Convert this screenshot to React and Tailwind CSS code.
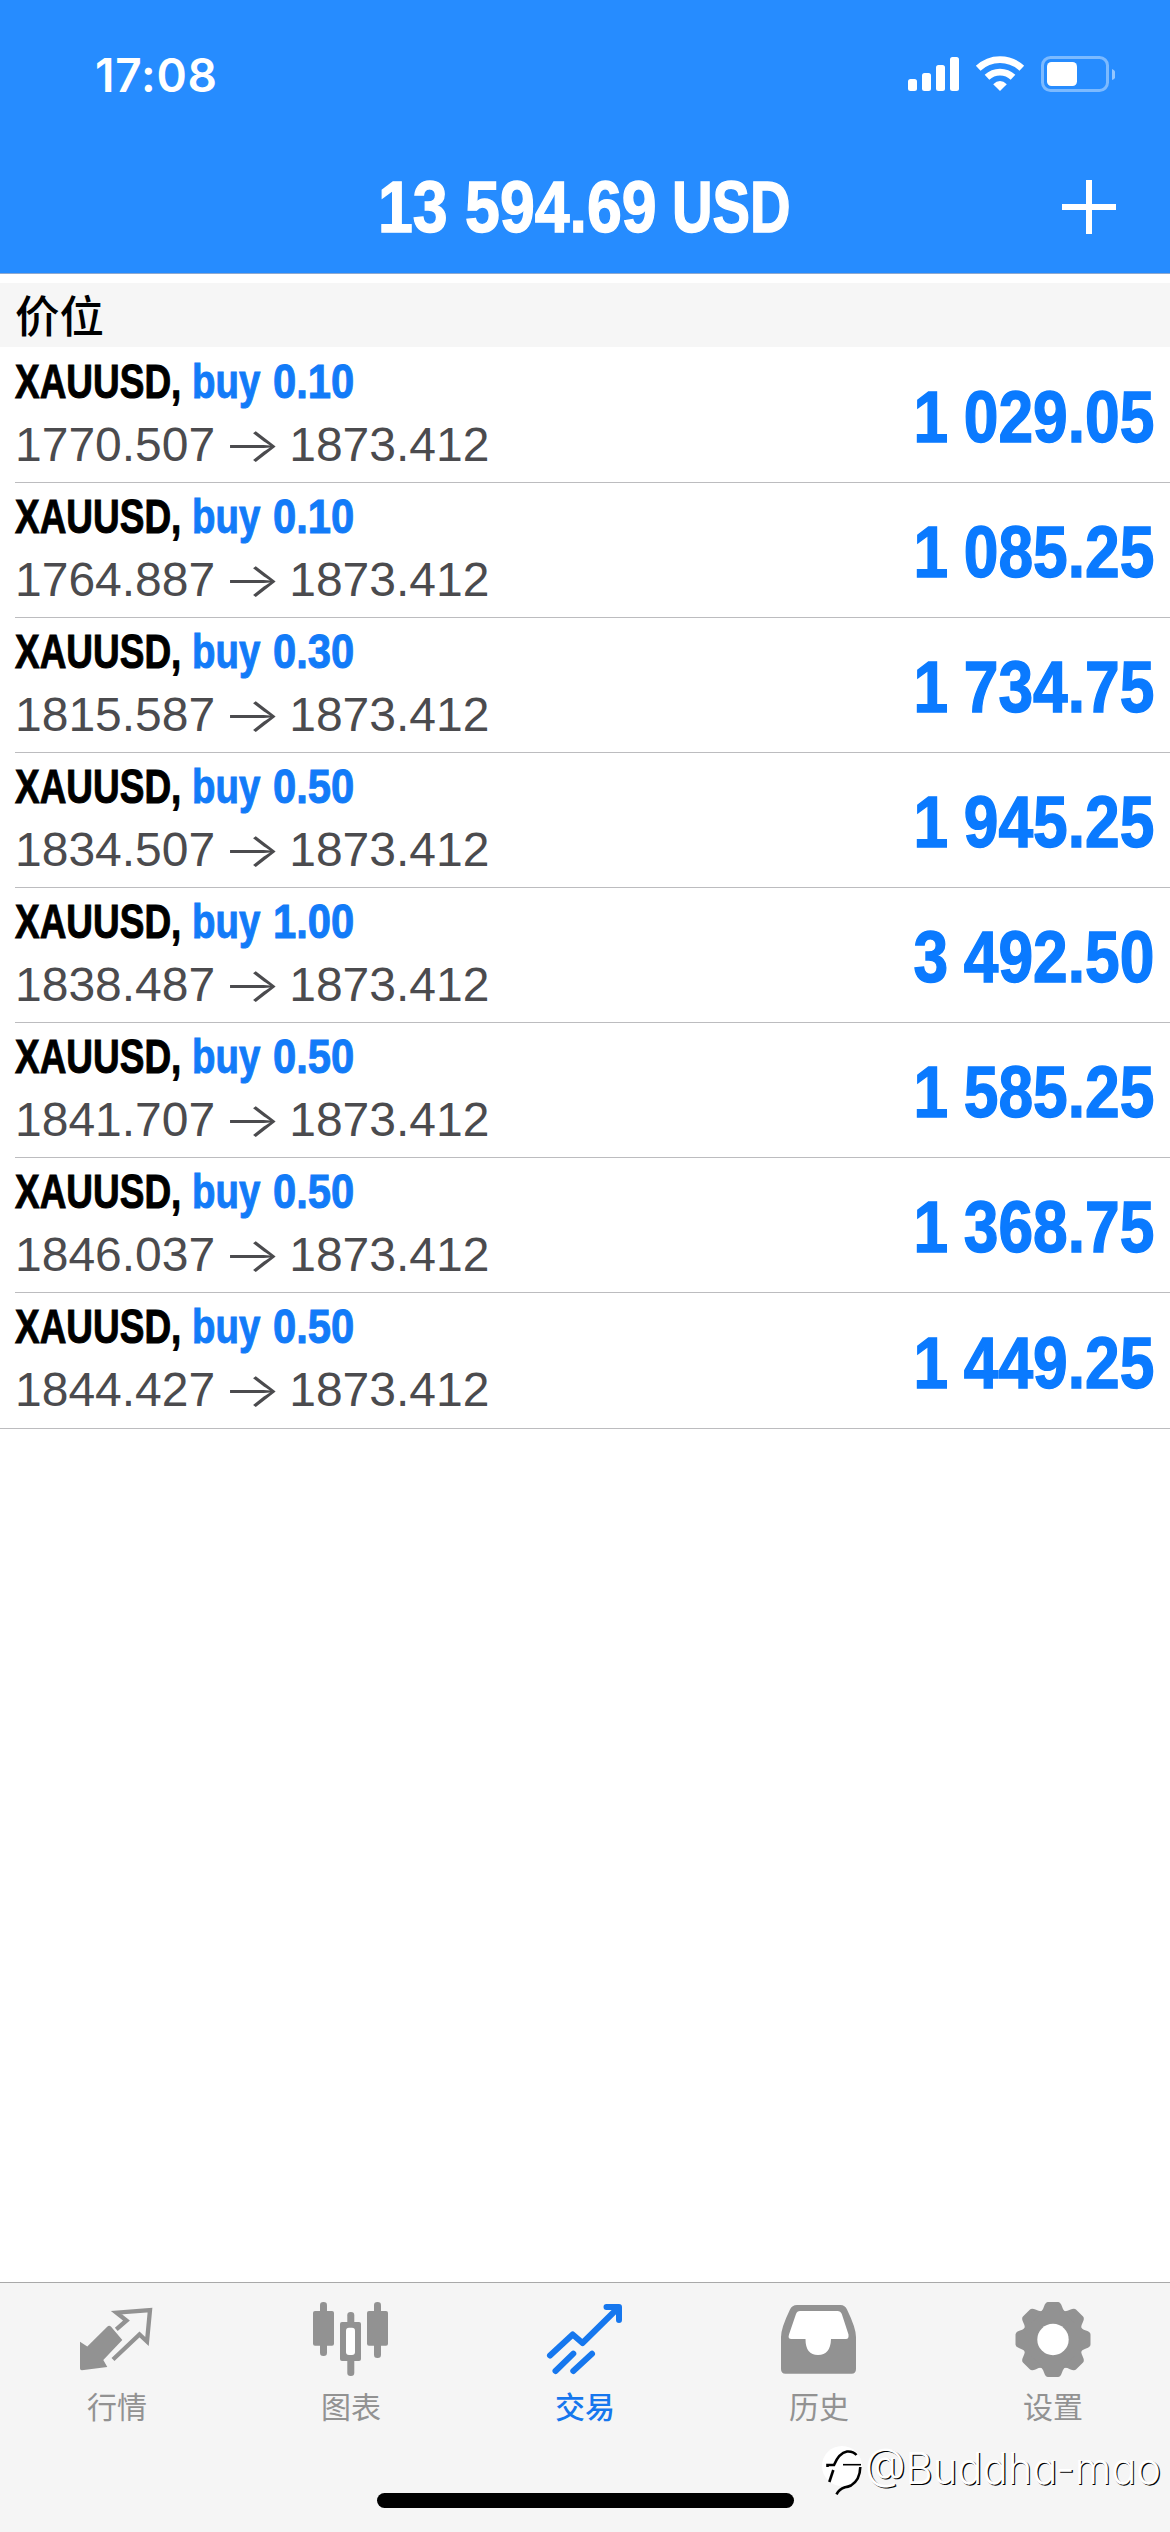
import React from 'react'

const positions = [
  { volume: '0.10', open: '1770.507', profit: '1 029.05' },
  { volume: '0.10', open: '1764.887', profit: '1 085.25' },
  { volume: '0.30', open: '1815.587', profit: '1 734.75' },
  { volume: '0.50', open: '1834.507', profit: '1 945.25' },
  { volume: '1.00', open: '1838.487', profit: '3 492.50' },
  { volume: '0.50', open: '1841.707', profit: '1 585.25' },
  { volume: '0.50', open: '1846.037', profit: '1 368.75' },
  { volume: '0.50', open: '1844.427', profit: '1 449.25' },
]

function StatusBar() {
  return (
    <div className="h-[142px] pl-[95px] pr-[55px] pt-[47px] flex items-start justify-between">
      <span className="font-['Inter'] font-semibold text-[46px] leading-[56px] tracking-[0.8px]">17:08</span>
      <svg className="mt-[5px]" width="209" height="44" viewBox="905 52 209 44" fill="#fff">
        <rect x="907" y="79" width="9" height="12" rx="2.5" />
        <rect x="921" y="73" width="9" height="18" rx="2.5" />
        <rect x="935" y="65" width="9" height="26" rx="2.5" />
        <rect x="949" y="57" width="9" height="34" rx="2.5" />
        <g fill="none" stroke="#fff" strokeWidth="6.8">
          <path d="M977.2 68.3a31.5 31.5 0 0 1 43.6 0" />
          <path d="M986 77.3a19 19 0 0 1 26 0" />
        </g>
        <path d="M999 91l-6.8-6.8q6.8-6.4 13.6 0z" />
        <rect x="1041.5" y="57.5" width="65" height="33" rx="8" fill="none" stroke="#fff" strokeOpacity=".4" strokeWidth="3" />
        <rect x="1046" y="62" width="30" height="24" rx="4.5" />
        <path d="M1111 69q4 1.500 4 5.500t-4 5.500z" fillOpacity=".5" />
      </svg>
    </div>
  )
}

function Header() {
  return (
    <header className="h-[274px] bg-[#268cff] text-white border-b border-[#8fa9cf]">
      <StatusBar />
      <div className="h-[130px] pl-[378px] pr-[54px] flex items-center">
        <h1 className="flex font-bold text-[72px] leading-[80px] whitespace-nowrap [-webkit-text-stroke:1.4px_currentColor]">
          <span className="w-[294px] origin-left scale-x-[0.87]">13 594.69</span>
          <span className="w-[120px] origin-left scale-x-[0.78]">USD</span>
        </h1>
        <svg className="ml-auto" width="54" height="54" viewBox="0 0 54 54" stroke="#fff" strokeWidth="6">
          <path d="M27 0v54M0 27h54" />
        </svg>
      </div>
    </header>
  )
}

function Position({ volume, open, profit }) {
  return (
    <li className="h-[135px] ml-[15px] pr-4 flex justify-between border-b border-[#bcbcbf] last:h-[136px] last:ml-0 last:pl-[15px]">
      <div className="pt-[3px] whitespace-nowrap">
        <div className="flex font-bold text-[48px] leading-[62px] [-webkit-text-stroke:1px_currentColor]">
          <span className="w-[177px] origin-left scale-x-[0.77] text-black">XAUUSD,</span>
          <span className="w-[81px] origin-left scale-x-[0.8] text-[#127bf8]">buy</span>
          <span className="w-[90px] origin-left scale-x-[0.87] text-[#127bf8]">{volume}</span>
        </div>
        <div className="flex text-[48px] leading-[64px] text-[#4b4b4e]">
          <span>{open}</span>
          <span className="w-[74px] text-center font-['Inter'] font-light scale-x-[1.3]">→</span>
          <span>1873.412</span>
        </div>
      </div>
      <div className="pt-1 self-center font-bold text-[72px] leading-[80px] [word-spacing:-2px] whitespace-nowrap text-[#0a7aff] origin-right scale-x-[0.865] [-webkit-text-stroke:1.4px_currentColor]">
        {profit}
      </div>
    </li>
  )
}

const QuotesIcon = () => (
  <svg width="80" height="80" viewBox="0 0 80 80">
    <path fill="currentColor" d="M3 41.700l7.300 4.800L30.500 26.500q1.800-1.500 3.600.3L45.300 40 26.300 60l4 7-25.500 3.300Q3 70.300 3 68.500z" />
    <path fill="none" stroke="currentColor" strokeWidth="4.300" d="M39.300 29.300L49.500 20.500 39.500 12.600 73 10 70 41.500 62.500 34.500 36 59.500" />
  </svg>
)

const ChartIcon = () => (
  <svg width="80" height="80" viewBox="0 0 80 80" fill="currentColor">
    <rect x="2" y="11" width="21" height="34.700" rx="2" />
    <rect x="9" y="2" width="7" height="54" rx="3.300" />
    <rect x="36.300" y="12" width="7" height="64" rx="3.300" />
    <rect x="29" y="22" width="21" height="39" rx="2" />
    <rect x="35" y="27.700" width="9" height="27.300" rx="3" fill="#fff" />
    <rect x="56" y="11" width="21" height="34.700" rx="2" />
    <rect x="63" y="2" width="7" height="56" rx="3.300" />
  </svg>
)

const TradeIcon = () => (
  <svg width="80" height="80" viewBox="0 0 80 80" fill="none" stroke="currentColor" strokeWidth="6" strokeLinecap="round">
    <path strokeLinejoin="round" d="M5 55.500L27.700 34.500 37.500 43 73 8M61.500 7H74V20" />
    <path d="M10.500 71L28.300 53.700M28.300 71L47 53.700" />
  </svg>
)

const HistoryIcon = () => (
  <svg width="80" height="80" viewBox="0 0 80 80">
    <path fill="currentColor" d="M18 5H61.500Q66 5 68 9.500 77 28 77 37V69Q77 73.700 72.500 73.700H6.500Q2 73.700 2 69V37Q2 28 11 9.500 13 5 18 5z" />
    <path fill="#fff" d="M21 11H58.500Q61.500 11 62.800 14L69.500 34.500Q70 39 67 39H52Q51.500 55 39 55T26.500 39H12.500Q8.500 39 10 34.500L17 14Q18 11 21 11z" />
  </svg>
)

const SettingsIcon = () => (
  <svg width="80" height="80" viewBox="-40 -39.500 80 80">
    <circle r="30.500" fill="currentColor" />
    {[0, 45, 90, 135, 180, 225, 270, 315].map((deg) => (
      <path key={deg} transform={`rotate(${deg})`} fill="currentColor" d="M-14-27Q-10.500-28-9-33-7.500-37.500-5-37.500H5Q7.500-37.500 9-33 10.500-28 14-27z" />
    ))}
    <circle r="15.700" fill="#fff" />
  </svg>
)

const tabs = [
  { label: '行情', Icon: QuotesIcon },
  { label: '图表', Icon: ChartIcon },
  { label: '交易', Icon: TradeIcon, active: true },
  { label: '历史', Icon: HistoryIcon },
  { label: '设置', Icon: SettingsIcon },
]

function Watermark() {
  return (
    <div className="absolute left-[821px] top-[2445px] flex items-start text-white whitespace-nowrap">
      <svg width="44" height="52" viewBox="0 0 44 52">
        <circle cx="21" cy="21" r="20" fill="#fff" />
        <g fill="none" stroke="#000" strokeWidth="2.600">
          <path d="M6.500 22v-2H13Q18 8 26 6.500q6-.5 9.500 3.500" />
          <path d="M12.300 25l-4 12" />
          <path d="M22 19.700h18" strokeWidth="1.600" />
          <path d="M39.300 22Q39 35 30 40.500q-3 1.500-6 1.800-6 2-8.500 7" />
        </g>
      </svg>
      <span className="w-[296px] origin-left scale-x-[0.95] font-['Inter'] font-light text-[44px] leading-[46px] [font-feature-settings:'cv11'] [text-shadow:1.2px_1px_0_#000]">@Buddha-mao</span>
    </div>
  )
}

export default function App() {
  return (
    <div className="relative w-[1170px] h-[2532px] flex flex-col overflow-hidden bg-white font-['Liberation_Sans','Noto_Sans_CJK_SC',sans-serif]">
      <Header />
      <main className="flex-1">
        <h2 className="mt-[9px] mb-px h-16 pl-[15px] bg-[#f6f6f6] text-black font-['Noto_Sans_CJK_SC',sans-serif] font-medium text-[44.5px] leading-[61px]">价位</h2>
        <ul>
          {positions.map((p) => (
            <Position key={p.open} {...p} />
          ))}
        </ul>
      </main>
      <nav className="h-[250px] pt-[17px] bg-[#f5f5f5] border-t border-[#a9a9a9] flex flex-col">
        <div className="grid grid-cols-5">
          {tabs.map(({ label, Icon, active }) => (
            <div key={label} className={active ? 'flex flex-col items-center font-medium text-[#1677ee]' : 'flex flex-col items-center text-[#929292]'}>
              <Icon />
              <span className="mt-[7px] font-['Noto_Sans_CJK_SC',sans-serif] text-[30px] leading-[36px]">{label}</span>
            </div>
          ))}
        </div>
        <div className="mt-auto mb-6 mx-auto w-[417px] h-[15px] rounded-full bg-black" />
      </nav>
      <Watermark />
    </div>
  )
}
